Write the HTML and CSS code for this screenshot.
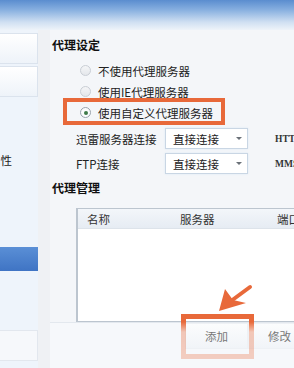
FILE: index.html
```html
<!DOCTYPE html>
<html lang="zh-CN">
<head>
    <meta charset="UTF-8">
    <meta name="viewport" content="width=device-width, initial-scale=1.0">
    <title>代理设定</title>
    <link rel="stylesheet" href="styles.css">
</head>
<body>
    <div class="titlebar"></div>
    <div class="app">
        <aside class="sidebar">
            <div class="nav-btn"></div>
            <div class="nav-btn"></div>
            <div class="nav-item">属性</div>
            <div class="nav-item active"></div>
            <div class="nav-box"></div>
        </aside>
        <div class="gutter"></div>
        <main class="panel">
            <h2 class="section-title">代理设定</h2>
            <ul class="radio-list">
                <li class="radio"><span class="dot"></span>不使用代理服务器</li>
                <li class="radio"><span class="dot"></span>使用IE代理服务器</li>
                <li class="radio checked marked"><span class="dot"></span>使用自定义代理服务器</li>
            </ul>
            <div class="conn-row">
                <span class="conn-label">迅雷服务器连接</span>
                <span class="select">直接连接<i class="caret"></i></span>
                <span class="proto">HTTP/HTTPS</span>
            </div>
            <div class="conn-row">
                <span class="conn-label">FTP连接</span>
                <span class="select">直接连接<i class="caret"></i></span>
                <span class="proto">MMS/RTSP</span>
            </div>
            <h2 class="section-title mgmt">代理管理</h2>
            <div class="table">
                <div class="thead">
                    <span class="col-name">名称</span>
                    <span class="col-server">服务器</span>
                    <span class="col-port">端口</span>
                </div>
                <div class="tbody"></div>
            </div>
            <div class="toolbar">
                <button class="btn marked-btn">添加</button>
                <button class="btn">修改</button>
            </div>
        </main>
    </div>

    <!-- annotation arrow pointing at the add button -->
    <svg class="arrow" width="44" height="36" viewBox="214 280 44 36">
        <line x1="250" y1="287" x2="231" y2="301" stroke="#e8693a" stroke-width="4" stroke-linecap="round"/>
        <polygon points="219,311 225,289 233,300 246,303" fill="#e8693a"/>
    </svg>
</body>
</html>
```

FILE: styles.css
```css
body {
    margin: 0;
    width: 294px;
    height: 368px;
    overflow: hidden;
    font-family: "Noto Sans CJK SC", "Noto Sans", sans-serif;
    font-size: 11.5px;
    color: #222;
    background-color: #f4f6f9;
    position: relative;
}
.titlebar {
    height: 30px;
    background: linear-gradient(#5a8dcf 0, #88b0e0 10px, #cfdff2 22px, #eef3f9 30px);
}
.app {
    display: flex;
    height: 338px;
}

/* left navigation */
.sidebar {
    width: 38px;
    flex: none;
    background-color: #eef4fb;
    display: flex;
    flex-direction: column;
    overflow: hidden;
}
.nav-btn {
    height: 29px;
    margin-top: 2px;
    border: 1px solid #dbe3ed;
    border-left: none;
    background: linear-gradient(#ffffff, #eef3f9);
}
.nav-btn:first-child {
    margin-top: 3px;
}
.nav-item {
    height: 14px;
    line-height: 14px;
    margin-top: 56px;
    margin-left: -11px;
    white-space: nowrap;
}
.nav-item.active {
    height: 24px;
    margin-top: 80px;
    margin-left: 0;
    background: linear-gradient(#5a8fd6, #3f74c4);
}
.nav-box {
    height: 29px;
    margin-top: 59px;
    border: 1px solid #e2e7ee;
    border-left: none;
    background-color: #f6f8fb;
}
.gutter {
    width: 12px;
    flex: none;
    background-color: #eff1f4;
}

/* main panel */
.panel {
    flex: 1;
    padding: 8px 0 0 2px;
    overflow: hidden;
    display: flex;
    flex-direction: column;
}
.section-title {
    margin: 0;
    font-size: 12px;
    line-height: 14px;
    font-weight: bold;
    color: #111;
}
.section-title.mgmt {
    margin-top: 7px;
}
.radio-list {
    list-style: none;
    margin: 8px 0 0 28px;
    padding: 0;
}
.radio {
    height: 21px;
    display: flex;
    align-items: center;
    gap: 7px;
    white-space: nowrap;
}
.dot {
    width: 9px;
    height: 9px;
    border-radius: 50%;
    border: 1px solid #c9ced5;
    background: linear-gradient(#f4f5f7, #e4e7eb);
    display: flex;
    align-items: center;
    justify-content: center;
}
.radio.checked .dot {
    border-color: #9aa3ad;
    background: #fbfcfd;
}
.radio.checked .dot::before {
    content: "";
    width: 4px;
    height: 4px;
    border-radius: 50%;
    background-color: #3f7a4a;
}
.radio.marked {
    position: relative;
}
.radio.marked::after {
    content: "";
    position: absolute;
    left: -17px;
    top: -4px;
    width: 154px;
    height: 19px;
    border: 4px solid #e8693a;
}

.conn-row {
    display: flex;
    align-items: center;
    height: 21px;
    margin-left: 24px;
    margin-top: 4px;
    white-space: nowrap;
}
.conn-row:first-of-type {
    margin-top: 5px;
}
.conn-row > * {
    flex: none;
}
.conn-label {
    width: 89px;
}
.select {
    width: 83px;
    height: 21px;
    box-sizing: border-box;
    border: 1px solid #c9d6e4;
    box-shadow: 0 0 2px #dce9f6;
    background-color: #fff;
    display: flex;
    align-items: center;
    padding-left: 7px;
    gap: 17px;
}
.caret {
    width: 0;
    height: 0;
    border-left: 3px solid transparent;
    border-right: 3px solid transparent;
    border-top: 3px solid #6b7178;
}
.proto {
    margin-left: 27px;
    font-family: "Liberation Serif", serif;
    font-size: 9.5px;
    font-weight: bold;
    color: #333;
}

/* proxy table */
.table {
    margin: 13px 0 0 24px;
    width: 240px;
    height: 114px;
    flex: none;
    border: 1px solid #bcc5cf;
    border-left-width: 2px;
    box-sizing: border-box;
    background-color: #fff;
    display: flex;
    flex-direction: column;
}
.thead {
    height: 19px;
    display: flex;
    align-items: center;
    background: linear-gradient(#f3f6fa, #e6ecf3);
    border-bottom: 1px solid #dde3ea;
    color: #333;
    white-space: nowrap;
}
.col-name {
    margin-left: 9px;
    width: 93px;
    flex: none;
}
.col-server {
    width: 97px;
    flex: none;
}
.tbody {
    flex: 1;
}

/* bottom buttons */
.toolbar {
    flex: 1;
    margin-left: -2px;
    display: flex;
    padding-left: 135px;
    background-color: #f6f8fb;
    border-top: 1px solid #e3e8ee;
}
.btn {
    width: 63px;
    height: 26px;
    flex: none;
    border: 1px solid #eef1f5;
    background: linear-gradient(#fbfcfd, #f1f4f8);
    color: #777;
    font-family: inherit;
    font-size: 11.5px;
    padding: 0;
    white-space: nowrap;
}
.marked-btn {
    position: relative;
}
.marked-btn::after {
    content: "";
    position: absolute;
    left: -5px;
    top: -10px;
    width: 63px;
    height: 35px;
    border: 5px solid #e8693a;
    -webkit-mask-image: linear-gradient(#000 0, #000 8px, rgba(0, 0, 0, 0.35) 18px, rgba(0, 0, 0, 0.3) 100%);
}
.arrow {
    position: absolute;
    left: 214px;
    top: 280px;
}
```
